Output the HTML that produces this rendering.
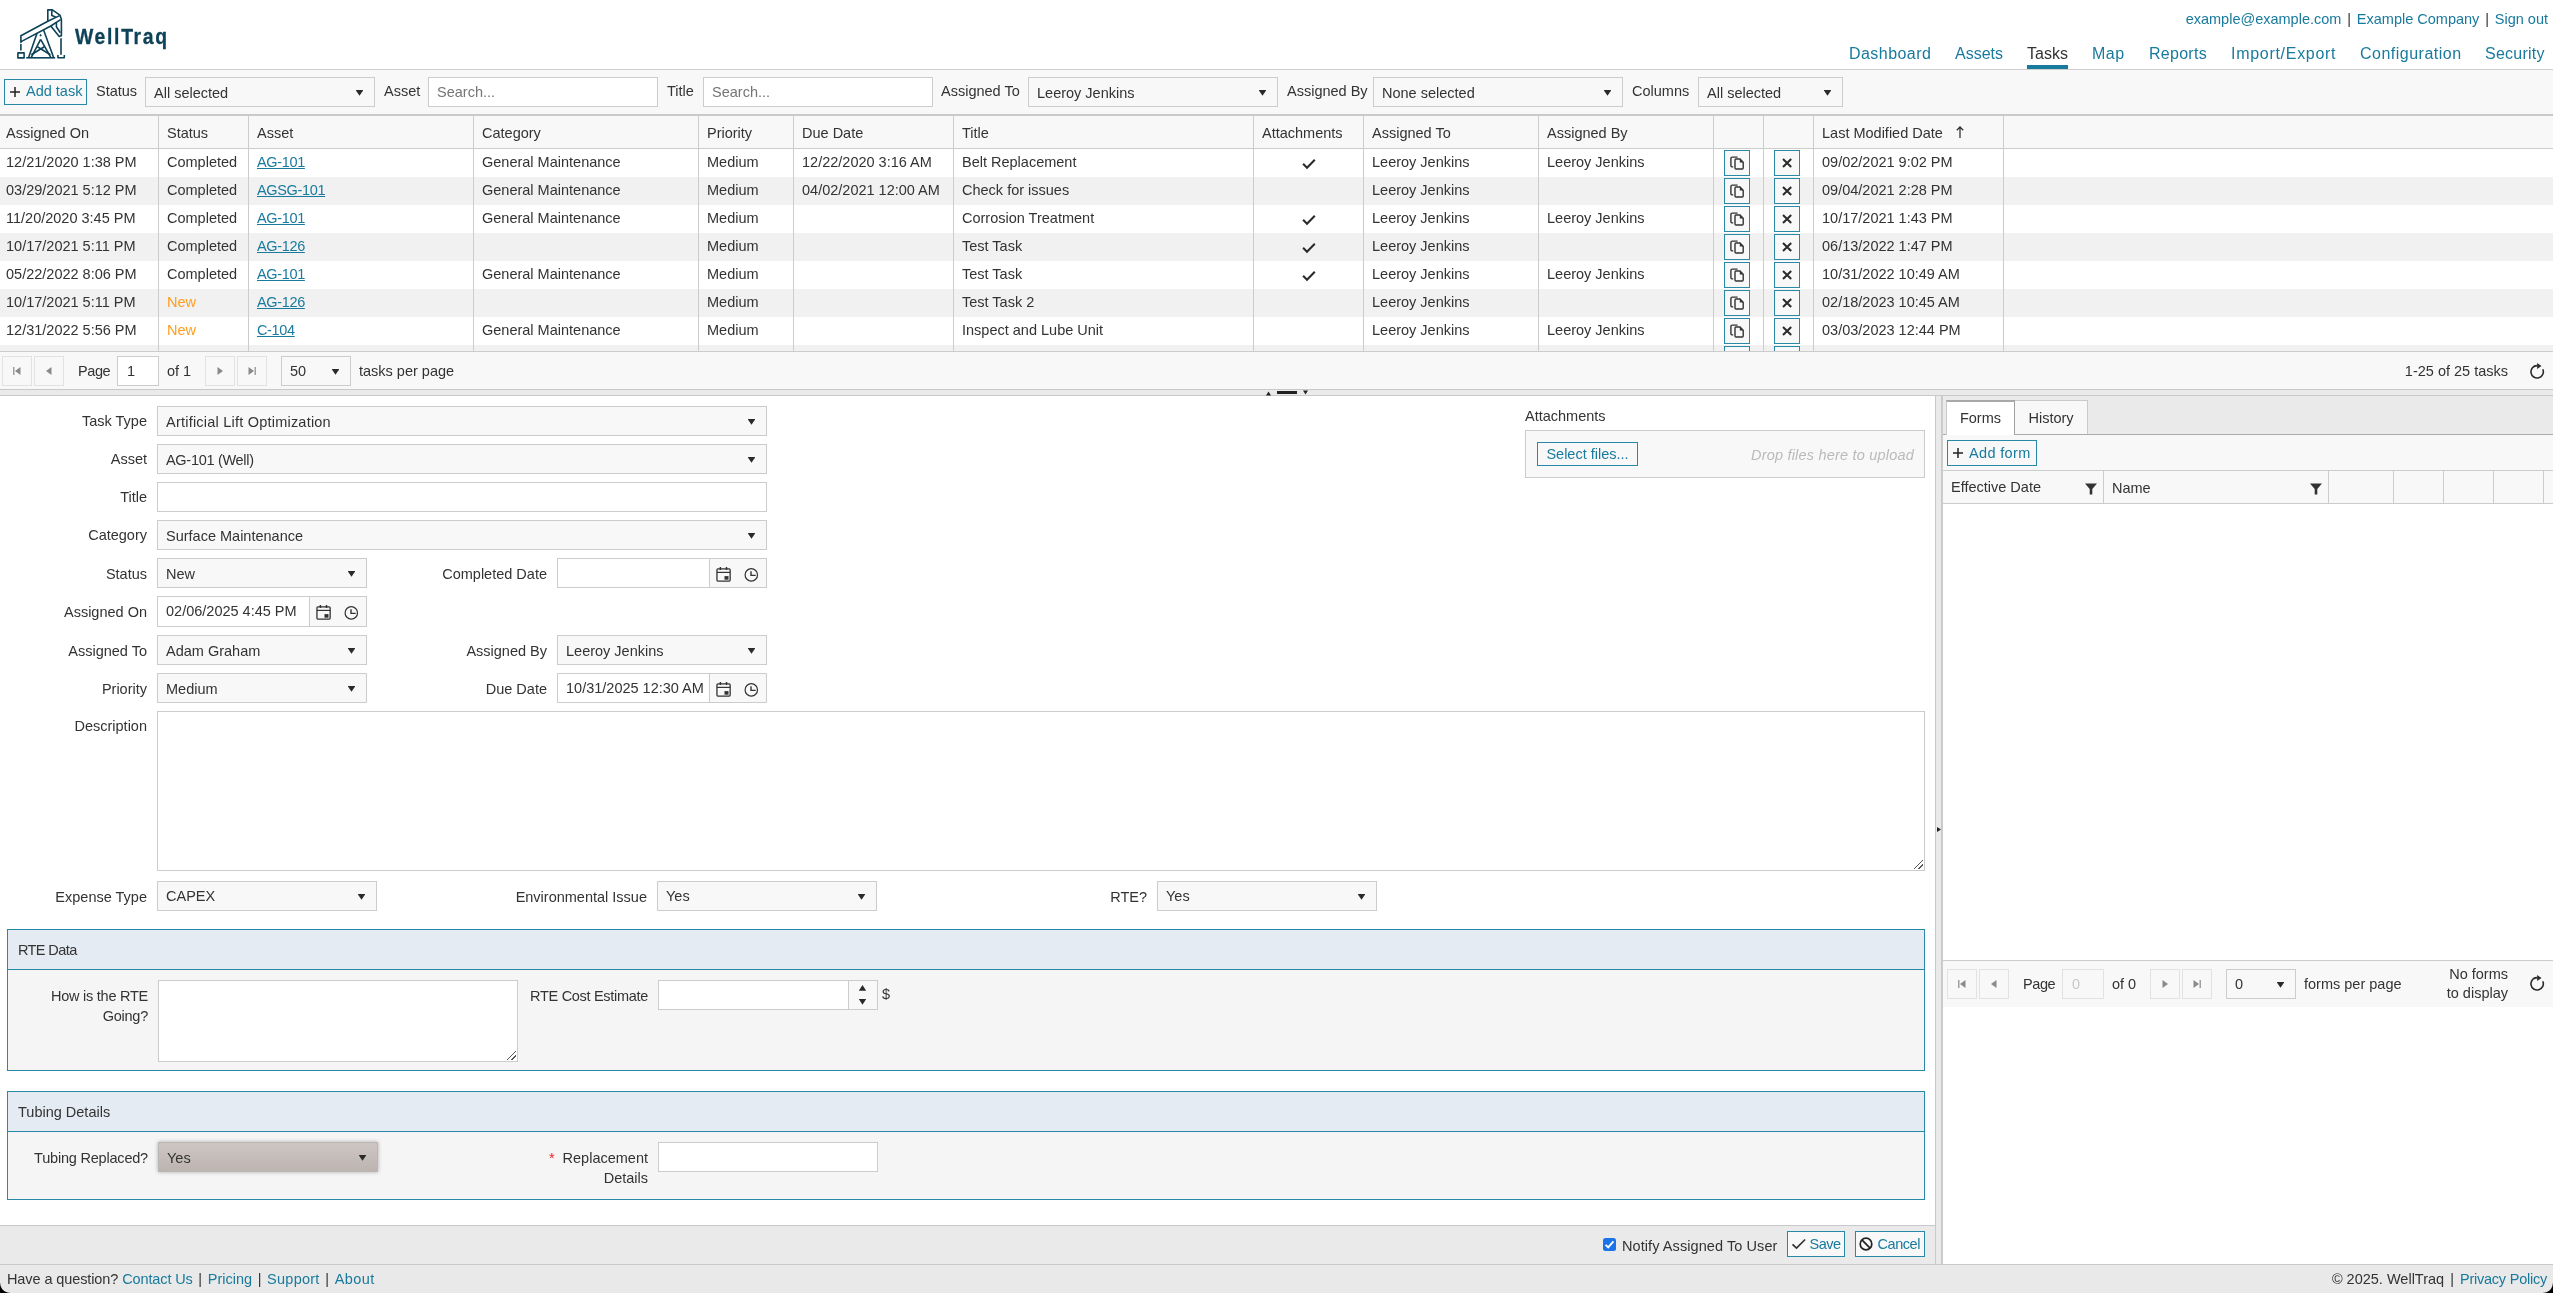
<!DOCTYPE html>
<html lang="en">
<head>
<meta charset="utf-8">
<title>WellTraq - Tasks</title>
<style>
*{box-sizing:border-box;margin:0;padding:0}
html,body{width:2553px;height:1293px;overflow:hidden;background:#fff}
body{font-family:"Liberation Sans",sans-serif;font-size:14.5px;color:#333;position:relative;line-height:20px}
a{color:#187a9d;text-decoration:none}
#wrap{position:absolute;left:0;top:0;width:2553px;height:1293px;overflow:hidden;will-change:transform}
.abs{position:absolute}
.t{position:absolute;white-space:nowrap;line-height:20px}
.r{text-align:right}
/* header */
#hdr{position:absolute;left:0;top:0;width:2553px;height:70px;border-bottom:1px solid #cfcfcf;background:#fff}
#brand{position:absolute;left:75px;top:20px;font-size:22.5px;font-weight:bold;color:#0e4258;letter-spacing:1.95px;line-height:34px;transform:scaleX(.86);transform-origin:0 0;white-space:nowrap;-webkit-text-stroke:.3px #0e4258}
.nav{position:absolute;top:43px;font-size:16px;line-height:22px;white-space:nowrap}
.nav.cur{color:#333}
.nav.cur:after{content:"";position:absolute;left:0;right:0;top:22px;height:4px;background:#187a9d}
/* toolbar */
#tb{position:absolute;left:0;top:70px;width:2553px;height:46px;background:#f8f8f8;border-bottom:2px solid #c9c9c9}
.btn{position:absolute;border:1px solid #2788a8;background:#f8f8f8;color:#187a9d;white-space:nowrap;line-height:22px;height:26px}
.sel{position:absolute;border:1px solid #ccc;background:#f8f8f8;height:30px;line-height:30px;padding-left:8px;white-space:nowrap;color:#333}
.sel:after{content:"";position:absolute;right:10.6px;top:12px;width:7.8px;height:5.8px;background:#2a2a2a;clip-path:polygon(0 0,100% 0,50% 100%)}
.inp{position:absolute;border:1px solid #ccc;background:#fff;height:30px;line-height:28px;padding-left:8px;white-space:nowrap;color:#333}
.ph{color:#757575}
/* grid */
#grid{position:absolute;left:0;top:116px;width:2553px;height:235px;overflow:hidden;background:#fff}
#grid table{border-collapse:separate;border-spacing:0;table-layout:fixed;width:2553px}
#grid th{height:33px;background:#f8f8f8;border-bottom:1px solid #ccc;font-weight:normal;text-align:left;padding:2px 0 0 8px;border-left:1px solid #ccc;white-space:nowrap;overflow:hidden}
#grid td{height:28px;padding:0 0 0 8px;border-left:1px solid #ccc;white-space:nowrap;overflow:hidden;line-height:20px;vertical-align:top;padding-top:3px}
#grid th:first-child,#grid td:first-child{border-left:0;padding-left:6px}
#grid tr.alt td{background:#f1f1f1}
#grid td a{text-decoration:underline;letter-spacing:-.35px}
.new{color:#ff9d1e}
.gb{display:block;width:26px;height:26px;border:1px solid #2b89a8;background:#f8f8f8;position:relative}
.gb svg{position:absolute;left:-1px;top:-1px}
tr.alt .gb{display:block;width:26px;height:26px;border:1px solid #2b89a8;background:#f8f8f8;position:relative}
.gb svg{position:absolute;left:-1px;top:-1px}
#grid td.c{text-align:center;padding:0;line-height:0}
#grid td.c svg{display:block;margin:0 auto}
#grid td.b{padding:1px 0 0 10px}

/* pager */
.pg{position:absolute;background:#f8f8f8}
.pb{position:absolute;width:30px;height:30px;border:1px solid #e2e2e2;background:#f8f8f8}
.pb svg{position:absolute;left:6px;top:6px}
/* splitters */
#hs{position:absolute;left:0;top:389px;width:2553px;height:7px;background:#eaeaea;border-top:1px solid #c9c9c9;border-bottom:1px solid #c9c9c9}
#vs{position:absolute;left:1935px;top:396px;width:7px;height:868px;background:#eaeaea;border-left:1px solid #c9c9c9;border-right:1px solid #c9c9c9}
/* form */
.lb{position:absolute;white-space:nowrap;text-align:right;line-height:20px}
.fs{position:absolute;border:1px solid #2788a8;background:#f5f5f5}
.fs .h{position:absolute;left:0;top:0;right:0;height:40px;background:#e4ebf3;border-bottom:1px solid #2788a8;padding:10px 0 0 10px;line-height:20px}
.dt{position:absolute;border:1px solid #ccc;background:#fff;height:30px;line-height:28px;padding-left:8px;white-space:nowrap;width:210px}
.dt .ic{position:absolute;right:0;top:0;width:57px;height:100%;background:#f8f8f8;border-left:1px solid #ccc}
.dt .ic svg{position:absolute;left:0;top:0}

.ta:after{content:"";position:absolute;right:1px;bottom:1px;width:9px;height:9px;background:linear-gradient(135deg,transparent 0,transparent 46%,#555 46%,#555 54%,transparent 54%,transparent 71%,#555 71%,#555 79%,transparent 79%)}
.sel.hov{background:linear-gradient(#cec6c3,#bdb4b0);border-color:#b9b6b4;box-shadow:0 0 4px rgba(0,0,0,.3)}
</style>
</head>
<body>
<div id="wrap">
<div id="hdr">
  <svg class="abs" style="left:10px;top:4px" width="64" height="60" viewBox="0 0 64 60" fill="none" stroke="#0e4258" stroke-width="1.6" stroke-linejoin="round" stroke-linecap="butt">
    <path d="M7.9 48.9h6.2v5H7.9z"/>
    <path d="M16.2 53.8h29"/>
    <path d="M47.9 51v2.7h6.4V51"/>
    <path d="M51 34.3v16.5M10.9 39.9v6.7"/>
    <path d="M10.9 38.4V31.8L37.8 17.2V5.9h4.6l7.5 5.2 1.5 4.4v16.2l-2.2 .8L40.8 22 11.6 37.4z"/>
    <path d="M37.8 17.2L49.6 11.6M50.6 15.6L40.8 22"/>
    <path d="M41.8 6.2v5.4l3.9 1.3M46.4 18.6v4.1l3.9 6.1"/>
    <path d="M27.1 28.9L18.6 53.4M33.6 26L43.6 53.4M30.6 35.3L21.3 53.4M30.6 35.3L40.8 53.4"/>
    <path d="M27.4 42.7L40.4 50.8M34.3 42.7L21.3 50.8"/>
    <circle cx="30.6" cy="31.3" r="0.7" fill="#0e4258" stroke-width="0.8"/>
  </svg>
  <div id="brand">WellTraq</div>
  <div class="t" style="right:5px;top:9px"><a>example@example.com</a> <span style="margin:0 1.8px">|</span> <a>Example Company</a> <span style="margin:0 1.8px">|</span> <a>Sign out</a></div>
  <a class="nav" style="left:1849px;letter-spacing:0.45px">Dashboard</a>
  <a class="nav" style="left:1955px">Assets</a>
  <a class="nav cur" style="left:2027px">Tasks</a>
  <a class="nav" style="left:2092px;letter-spacing:0.46px">Map</a>
  <a class="nav" style="left:2149px;letter-spacing:0.27px">Reports</a>
  <a class="nav" style="left:2231px;letter-spacing:0.71px">Import/Export</a>
  <a class="nav" style="left:2360px;letter-spacing:0.49px">Configuration</a>
  <a class="nav" style="left:2485px;letter-spacing:0.24px">Security</a>
</div>
<div id="tb">
  <div class="btn" style="left:4px;top:9px;width:83px;padding-left:21px">Add task<svg class="abs" style="left:4px;top:6px" width="12" height="12" viewBox="0 0 12 12"><path d="M6 1v10M1 6h10" stroke="#222" stroke-width="1.5"/></svg></div>
  <div class="t" style="left:96px;top:11px">Status</div>
  <div class="sel" style="left:145px;top:7px;width:230px">All selected</div>
  <div class="t" style="left:384px;top:11px">Asset</div>
  <div class="inp ph" style="left:428px;top:7px;width:230px">Search...</div>
  <div class="t" style="left:667px;top:11px">Title</div>
  <div class="inp ph" style="left:703px;top:7px;width:230px">Search...</div>
  <div class="t" style="left:941px;top:11px">Assigned To</div>
  <div class="sel" style="left:1028px;top:7px;width:250px">Leeroy Jenkins</div>
  <div class="t" style="left:1287px;top:11px">Assigned By</div>
  <div class="sel" style="left:1373px;top:7px;width:250px">None selected</div>
  <div class="t" style="left:1632px;top:11px">Columns</div>
  <div class="sel" style="left:1698px;top:7px;width:145px">All selected</div>
</div>
<div id="grid">
<table>
<colgroup><col style="width:158px"><col style="width:90px"><col style="width:225px"><col style="width:225px"><col style="width:95px"><col style="width:160px"><col style="width:300px"><col style="width:110px"><col style="width:175px"><col style="width:175px"><col style="width:50px"><col style="width:50px"><col style="width:190px"><col></colgroup>
<thead><tr><th>Assigned On</th><th>Status</th><th>Asset</th><th>Category</th><th>Priority</th><th>Due Date</th><th>Title</th><th>Attachments</th><th>Assigned To</th><th>Assigned By</th><th></th><th></th><th>Last Modified Date<svg style="margin-left:12px;vertical-align:-1px" width="10" height="14" viewBox="0 0 10 14"><path d="M5 2v11M1.8 5.2L5 2l3.2 3.2" fill="none" stroke="#333" stroke-width="1.3"/></svg></th><th></th></tr></thead>
<tbody id="gbody">
<tr><td>12/21/2020 1:38 PM</td><td>Completed</td><td><a>AG-101</a></td><td>General Maintenance</td><td>Medium</td><td>12/22/2020 3:16 AM</td><td>Belt Replacement</td><td class="c"><svg width="16" height="28" viewBox="0 0 16 28"><path d="M2.1 14.7L6 18.7l7.8-8" fill="none" stroke="#2a2a2a" stroke-width="2"/></svg></td><td>Leeroy Jenkins</td><td>Leeroy Jenkins</td><td class="b"><span class="gb"><svg width="26" height="26" viewBox="0 0 26 26"><path d="M13.6 7.1H8.4Q6.9 7.1 6.9 8.6v6.8q0 1.5 1.5 1.5h.8" fill="none" stroke="#333" stroke-width="1.4"/><path d="M12 9h4l3.2 3.2V18q0 1-1 1H12q-1 0-1-1v-8q0-1 1-1z" fill="none" stroke="#333" stroke-width="1.4"/><path d="M15.8 8.8l3.6 3.6h-3.6z" fill="#333"/></svg></span></td><td class="b"><span class="gb"><svg width="26" height="26" viewBox="0 0 26 26"><path d="M9 9l8.2 8M17.2 9L9 17" fill="none" stroke="#2a2a2a" stroke-width="2"/></svg></span></td><td>09/02/2021 9:02 PM</td><td></td></tr>
<tr class="alt"><td>03/29/2021 5:12 PM</td><td>Completed</td><td><a>AGSG-101</a></td><td>General Maintenance</td><td>Medium</td><td>04/02/2021 12:00 AM</td><td>Check for issues</td><td class="c"></td><td>Leeroy Jenkins</td><td></td><td class="b"><span class="gb"><svg width="26" height="26" viewBox="0 0 26 26"><path d="M13.6 7.1H8.4Q6.9 7.1 6.9 8.6v6.8q0 1.5 1.5 1.5h.8" fill="none" stroke="#333" stroke-width="1.4"/><path d="M12 9h4l3.2 3.2V18q0 1-1 1H12q-1 0-1-1v-8q0-1 1-1z" fill="none" stroke="#333" stroke-width="1.4"/><path d="M15.8 8.8l3.6 3.6h-3.6z" fill="#333"/></svg></span></td><td class="b"><span class="gb"><svg width="26" height="26" viewBox="0 0 26 26"><path d="M9 9l8.2 8M17.2 9L9 17" fill="none" stroke="#2a2a2a" stroke-width="2"/></svg></span></td><td>09/04/2021 2:28 PM</td><td></td></tr>
<tr><td>11/20/2020 3:45 PM</td><td>Completed</td><td><a>AG-101</a></td><td>General Maintenance</td><td>Medium</td><td></td><td>Corrosion Treatment</td><td class="c"><svg width="16" height="28" viewBox="0 0 16 28"><path d="M2.1 14.7L6 18.7l7.8-8" fill="none" stroke="#2a2a2a" stroke-width="2"/></svg></td><td>Leeroy Jenkins</td><td>Leeroy Jenkins</td><td class="b"><span class="gb"><svg width="26" height="26" viewBox="0 0 26 26"><path d="M13.6 7.1H8.4Q6.9 7.1 6.9 8.6v6.8q0 1.5 1.5 1.5h.8" fill="none" stroke="#333" stroke-width="1.4"/><path d="M12 9h4l3.2 3.2V18q0 1-1 1H12q-1 0-1-1v-8q0-1 1-1z" fill="none" stroke="#333" stroke-width="1.4"/><path d="M15.8 8.8l3.6 3.6h-3.6z" fill="#333"/></svg></span></td><td class="b"><span class="gb"><svg width="26" height="26" viewBox="0 0 26 26"><path d="M9 9l8.2 8M17.2 9L9 17" fill="none" stroke="#2a2a2a" stroke-width="2"/></svg></span></td><td>10/17/2021 1:43 PM</td><td></td></tr>
<tr class="alt"><td>10/17/2021 5:11 PM</td><td>Completed</td><td><a>AG-126</a></td><td></td><td>Medium</td><td></td><td>Test Task</td><td class="c"><svg width="16" height="28" viewBox="0 0 16 28"><path d="M2.1 14.7L6 18.7l7.8-8" fill="none" stroke="#2a2a2a" stroke-width="2"/></svg></td><td>Leeroy Jenkins</td><td></td><td class="b"><span class="gb"><svg width="26" height="26" viewBox="0 0 26 26"><path d="M13.6 7.1H8.4Q6.9 7.1 6.9 8.6v6.8q0 1.5 1.5 1.5h.8" fill="none" stroke="#333" stroke-width="1.4"/><path d="M12 9h4l3.2 3.2V18q0 1-1 1H12q-1 0-1-1v-8q0-1 1-1z" fill="none" stroke="#333" stroke-width="1.4"/><path d="M15.8 8.8l3.6 3.6h-3.6z" fill="#333"/></svg></span></td><td class="b"><span class="gb"><svg width="26" height="26" viewBox="0 0 26 26"><path d="M9 9l8.2 8M17.2 9L9 17" fill="none" stroke="#2a2a2a" stroke-width="2"/></svg></span></td><td>06/13/2022 1:47 PM</td><td></td></tr>
<tr><td>05/22/2022 8:06 PM</td><td>Completed</td><td><a>AG-101</a></td><td>General Maintenance</td><td>Medium</td><td></td><td>Test Task</td><td class="c"><svg width="16" height="28" viewBox="0 0 16 28"><path d="M2.1 14.7L6 18.7l7.8-8" fill="none" stroke="#2a2a2a" stroke-width="2"/></svg></td><td>Leeroy Jenkins</td><td>Leeroy Jenkins</td><td class="b"><span class="gb"><svg width="26" height="26" viewBox="0 0 26 26"><path d="M13.6 7.1H8.4Q6.9 7.1 6.9 8.6v6.8q0 1.5 1.5 1.5h.8" fill="none" stroke="#333" stroke-width="1.4"/><path d="M12 9h4l3.2 3.2V18q0 1-1 1H12q-1 0-1-1v-8q0-1 1-1z" fill="none" stroke="#333" stroke-width="1.4"/><path d="M15.8 8.8l3.6 3.6h-3.6z" fill="#333"/></svg></span></td><td class="b"><span class="gb"><svg width="26" height="26" viewBox="0 0 26 26"><path d="M9 9l8.2 8M17.2 9L9 17" fill="none" stroke="#2a2a2a" stroke-width="2"/></svg></span></td><td>10/31/2022 10:49 AM</td><td></td></tr>
<tr class="alt"><td>10/17/2021 5:11 PM</td><td class="new">New</td><td><a>AG-126</a></td><td></td><td>Medium</td><td></td><td>Test Task 2</td><td class="c"></td><td>Leeroy Jenkins</td><td></td><td class="b"><span class="gb"><svg width="26" height="26" viewBox="0 0 26 26"><path d="M13.6 7.1H8.4Q6.9 7.1 6.9 8.6v6.8q0 1.5 1.5 1.5h.8" fill="none" stroke="#333" stroke-width="1.4"/><path d="M12 9h4l3.2 3.2V18q0 1-1 1H12q-1 0-1-1v-8q0-1 1-1z" fill="none" stroke="#333" stroke-width="1.4"/><path d="M15.8 8.8l3.6 3.6h-3.6z" fill="#333"/></svg></span></td><td class="b"><span class="gb"><svg width="26" height="26" viewBox="0 0 26 26"><path d="M9 9l8.2 8M17.2 9L9 17" fill="none" stroke="#2a2a2a" stroke-width="2"/></svg></span></td><td>02/18/2023 10:45 AM</td><td></td></tr>
<tr><td>12/31/2022 5:56 PM</td><td class="new">New</td><td><a>C-104</a></td><td>General Maintenance</td><td>Medium</td><td></td><td>Inspect and Lube Unit</td><td class="c"></td><td>Leeroy Jenkins</td><td>Leeroy Jenkins</td><td class="b"><span class="gb"><svg width="26" height="26" viewBox="0 0 26 26"><path d="M13.6 7.1H8.4Q6.9 7.1 6.9 8.6v6.8q0 1.5 1.5 1.5h.8" fill="none" stroke="#333" stroke-width="1.4"/><path d="M12 9h4l3.2 3.2V18q0 1-1 1H12q-1 0-1-1v-8q0-1 1-1z" fill="none" stroke="#333" stroke-width="1.4"/><path d="M15.8 8.8l3.6 3.6h-3.6z" fill="#333"/></svg></span></td><td class="b"><span class="gb"><svg width="26" height="26" viewBox="0 0 26 26"><path d="M9 9l8.2 8M17.2 9L9 17" fill="none" stroke="#2a2a2a" stroke-width="2"/></svg></span></td><td>03/03/2023 12:44 PM</td><td></td></tr>
<tr class="alt"><td></td><td></td><td></td><td></td><td></td><td></td><td></td><td class="c"></td><td></td><td></td><td class="b"><span class="gb"><svg width="26" height="26" viewBox="0 0 26 26"><path d="M13.6 7.1H8.4Q6.9 7.1 6.9 8.6v6.8q0 1.5 1.5 1.5h.8" fill="none" stroke="#333" stroke-width="1.4"/><path d="M12 9h4l3.2 3.2V18q0 1-1 1H12q-1 0-1-1v-8q0-1 1-1z" fill="none" stroke="#333" stroke-width="1.4"/><path d="M15.8 8.8l3.6 3.6h-3.6z" fill="#333"/></svg></span></td><td class="b"><span class="gb"><svg width="26" height="26" viewBox="0 0 26 26"><path d="M9 9l8.2 8M17.2 9L9 17" fill="none" stroke="#2a2a2a" stroke-width="2"/></svg></span></td><td></td><td></td></tr>
</tbody>
</table>
</div>
<div class="pg" style="left:0;top:351px;width:2553px;height:38px;border-top:1px solid #ccc">
  <div class="pb" style="left:2px;top:4px"><svg width="16" height="16" viewBox="0 0 16 16"><path d="M4.2 4h1.2v8H4.2zM11.5 4v8L6 8z" fill="#8a8a8a"/></svg></div>
  <div class="pb" style="left:34px;top:4px"><svg width="16" height="16" viewBox="0 0 16 16"><path d="M10.5 4v8L5 8z" fill="#8a8a8a"/></svg></div>
  <div class="t" style="left:78px;top:9px;letter-spacing:-.4px">Page</div>
  <div class="inp" style="left:117px;top:4px;width:42px;padding-left:9px">1</div>
  <div class="t" style="left:167px;top:9px">of 1</div>
  <div class="pb" style="left:205px;top:4px"><svg width="16" height="16" viewBox="0 0 16 16"><path d="M5.5 4v8L11 8z" fill="#8a8a8a"/></svg></div>
  <div class="pb" style="left:237px;top:4px"><svg width="16" height="16" viewBox="0 0 16 16"><path d="M10.6 4h1.2v8h-1.2zM4.5 4v8L10 8z" fill="#8a8a8a"/></svg></div>
  <div class="sel" style="left:281px;top:4px;width:70px;line-height:28px">50</div>
  <div class="t" style="left:359px;top:9px">tasks per page</div>
  <div class="t" style="right:45px;top:9px">1-25 of 25 tasks</div>
  <div class="abs" style="left:2528px;top:10px"><svg width="18" height="18" viewBox="0 0 18 18"><path d="M9.1 3.6A6.2 6.2 0 1 0 14.8 7.3" fill="none" stroke="#2a2a2a" stroke-width="1.6"/><path d="M9.1 .9l4.4 3.1-4.4 2.9z" fill="#2a2a2a"/></svg></div>
</div>
<div id="hs"><svg class="abs" style="left:1264px;top:0" width="50" height="6" viewBox="0 0 50 6"><path d="M2 5.5l2.5-4 2.5 4zM13 1h20v3H13zM39 0.5l2.5 4 2.5-4z" fill="#222"/></svg></div>
<div id="vs"><svg class="abs" style="left:0;top:429px" width="6" height="10" viewBox="0 0 6 10"><path d="M1 2l4 2.5L1 7z" fill="#222"/></svg></div>

<div id="form">
<div class="lb" style="left:0;width:147px;top:411px">Task Type</div><div class="sel" style="left:157px;top:406px;width:610px;letter-spacing:.22px">Artificial Lift Optimization</div>
<div class="lb" style="left:0;width:147px;top:449px">Asset</div><div class="sel" style="left:157px;top:444px;width:610px;letter-spacing:-.3px">AG-101 (Well)</div>
<div class="lb" style="left:0;width:147px;top:487px">Title</div><div class="inp" style="left:157px;top:482px;width:610px"></div>
<div class="lb" style="left:0;width:147px;top:525px">Category</div><div class="sel" style="left:157px;top:520px;width:610px">Surface Maintenance</div>
<div class="lb" style="left:0;width:147px;top:564px">Status</div><div class="sel" style="left:157px;top:558px;width:210px">New</div>
<div class="lb" style="left:0;width:547px;top:564px">Completed Date</div><div class="dt" style="left:557px;top:558px"><span class="ic"><svg width="56" height="28" viewBox="0 0 56 28" fill="none" stroke="#333"><rect x="6.95" y="9.95" width="13.2" height="12.1" rx="1" stroke-width="1.3"/><path d="M6.95 13.4h13.2" stroke-width="1.2"/><path d="M10.4 8.1v2.8M16.5 8.1v2.8" stroke-width="1.5"/><path d="M14.5 17.1h4v3.6h-4z" fill="#333" stroke="none"/><circle cx="41.3" cy="15.9" r="6.2" stroke-width="1.2"/><path d="M41 12.2v4.2h4.7" stroke-width="1.4"/></svg></span></div>
<div class="lb" style="left:0;width:147px;top:602px">Assigned On</div><div class="dt" style="left:157px;top:596px;height:31px">02/06/2025 4:45 PM<span class="ic"><svg width="56" height="28" viewBox="0 0 56 28" fill="none" stroke="#333"><rect x="6.95" y="9.95" width="13.2" height="12.1" rx="1" stroke-width="1.3"/><path d="M6.95 13.4h13.2" stroke-width="1.2"/><path d="M10.4 8.1v2.8M16.5 8.1v2.8" stroke-width="1.5"/><path d="M14.5 17.1h4v3.6h-4z" fill="#333" stroke="none"/><circle cx="41.3" cy="15.9" r="6.2" stroke-width="1.2"/><path d="M41 12.2v4.2h4.7" stroke-width="1.4"/></svg></span></div>
<div class="lb" style="left:0;width:147px;top:641px">Assigned To</div><div class="sel" style="left:157px;top:635px;width:210px">Adam Graham</div>
<div class="lb" style="left:0;width:547px;top:641px">Assigned By</div><div class="sel" style="left:557px;top:635px;width:210px">Leeroy Jenkins</div>
<div class="lb" style="left:0;width:147px;top:679px">Priority</div><div class="sel" style="left:157px;top:673px;width:210px">Medium</div>
<div class="lb" style="left:0;width:547px;top:679px">Due Date</div><div class="dt" style="left:557px;top:673px">10/31/2025 12:30 AM<span class="ic"><svg width="56" height="28" viewBox="0 0 56 28" fill="none" stroke="#333"><rect x="6.95" y="9.95" width="13.2" height="12.1" rx="1" stroke-width="1.3"/><path d="M6.95 13.4h13.2" stroke-width="1.2"/><path d="M10.4 8.1v2.8M16.5 8.1v2.8" stroke-width="1.5"/><path d="M14.5 17.1h4v3.6h-4z" fill="#333" stroke="none"/><circle cx="41.3" cy="15.9" r="6.2" stroke-width="1.2"/><path d="M41 12.2v4.2h4.7" stroke-width="1.4"/></svg></span></div>
<div class="lb" style="left:0;width:147px;top:716px">Description</div><div class="inp ta" style="left:157px;top:711px;width:1768px;height:160px"></div>
<div class="lb" style="left:0;width:147px;top:887px">Expense Type</div><div class="sel" style="left:157px;top:881px;width:220px;line-height:28px">CAPEX</div>
<div class="lb" style="left:0;width:647px;top:887px">Environmental Issue</div><div class="sel" style="left:657px;top:881px;width:220px;line-height:28px">Yes</div>
<div class="lb" style="left:0;width:1147px;top:887px">RTE?</div><div class="sel" style="left:1157px;top:881px;width:220px;line-height:28px">Yes</div>
<div class="t" style="left:1525px;top:406px">Attachments</div>
<div class="abs" style="left:1525px;top:430px;width:400px;height:48px;border:1px solid #ccc;background:#f8f8f8">
  <div class="btn" style="left:11px;top:11px;width:101px;height:24px;line-height:22px;text-align:center">Select files...</div>
  <div class="t" style="right:10px;top:14px;color:#bababa;font-style:italic;letter-spacing:.2px">Drop files here to upload</div>
</div>
<div class="fs" style="left:7px;top:929px;width:1918px;height:142px">
  <div class="h" style="letter-spacing:-.6px">RTE Data</div>
  <div class="lb" style="left:0;width:140px;top:57px;white-space:normal;line-height:19.5px;letter-spacing:-.25px">How is the RTE Going?</div>
  <div class="inp ta" style="left:150px;top:50px;width:360px;height:82px"></div>
  <div class="lb" style="left:400px;width:240px;top:56px;letter-spacing:-.3px">RTE Cost Estimate</div>
  <div class="inp" style="left:650px;top:50px;width:220px"><span class="abs" style="right:0;top:0;width:29px;height:28px;background:#f8f8f8;border-left:1px solid #ccc"><svg class="abs" style="left:0;top:0" width="28" height="28" viewBox="0 0 28 28"><path d="M9.8 9.7l3.7-5.6 3.7 5.6zM9.8 18l3.7 5.8 3.7-5.8z" fill="#2a2a2a"/></svg></span></div>
  <div class="t" style="left:874px;top:54px">$</div>
</div>
<div class="fs" style="left:7px;top:1091px;width:1918px;height:109px">
  <div class="h">Tubing Details</div>
  <div class="lb" style="left:0;width:140px;top:56px;letter-spacing:-.2px">Tubing Replaced?</div>
  <div class="sel hov" style="left:150px;top:50px;width:220px">Yes</div>
  <div class="lb" style="left:400px;width:240px;top:57px;white-space:normal;line-height:19.5px"><span style="color:#e8202a;margin-right:4px">*</span> Replacement<br>Details</div>
  <div class="inp" style="left:650px;top:50px;width:220px"></div>
</div>
<div class="abs" style="left:0;top:1225px;width:1935px;height:39px;background:#eaeaea;border-top:1px solid #c9c9c9"></div>
<div class="abs" style="left:1603px;top:1238px;width:13px;height:13px;border-radius:2.5px;background:#1a73e8"><svg class="abs" style="left:0;top:0" width="13" height="13" viewBox="0 0 13 13"><path d="M2.6 6.8l2.6 2.6 5.2-6" fill="none" stroke="#fff" stroke-width="1.9"/></svg></div>
<div class="t" style="left:1622px;top:1236px;letter-spacing:.08px">Notify Assigned To User</div>
<div class="btn" style="left:1787px;top:1231px;width:58px;padding-left:21.5px;line-height:24px;letter-spacing:-.5px">Save<svg class="abs" style="left:3px;top:4px" width="16" height="16" viewBox="0 0 16 16"><path d="M1.5 8.3l4 3.8 8.6-8.6" fill="none" stroke="#333" stroke-width="1.7"/></svg></div>
<div class="btn" style="left:1855px;top:1231px;width:70px;padding-left:21.5px;line-height:24px;letter-spacing:-.45px">Cancel<svg class="abs" style="left:2px;top:4px" width="16" height="16" viewBox="0 0 16 16"><circle cx="8" cy="8" r="5.8" fill="none" stroke="#222" stroke-width="1.7"/><path d="M3.9 3.9l8.2 8.2" stroke="#222" stroke-width="1.7"/></svg></div>
</div>

<div id="right" class="abs" style="left:1942px;top:396px;width:611px;height:868px;background:#fff;border-left:1px solid #ccc">
  <div class="abs" style="left:0;top:0;width:610px;height:39px;background:#eaeaea;border-bottom:1px solid #ababab"></div>
  <div class="abs" style="left:3px;top:4px;width:69px;height:35px;background:#fff;border:1px solid #c9c9c9;border-top:2px solid #a8a8a8;border-right-color:#a0a0a0;border-bottom:0;text-align:center;line-height:33px">Forms</div>
  <div class="abs" style="left:72px;top:4px;width:73px;height:34px;background:#f8f8f8;border:1px solid #c9c9c9;border-left:0;border-bottom:0;text-align:center;line-height:34px">History</div>
  <div class="abs" style="left:0;top:39px;width:610px;height:36px;background:#f8f8f8"></div>
  <div class="btn" style="left:4px;top:44px;width:90px;padding-left:21px;line-height:24px;letter-spacing:.35px">Add form<svg class="abs" style="left:4px;top:6px" width="12" height="12" viewBox="0 0 12 12"><path d="M6 1v10M1 6h10" stroke="#222" stroke-width="1.5"/></svg></div>
  <div class="abs" style="left:0;top:74px;width:610px;height:34px;background:#f8f8f8;border-top:1px solid #ccc;border-bottom:1px solid #ccc">
    <div class="t" style="left:8px;top:6px">Effective Date</div>
    <div class="abs" style="left:141px;top:10px"><svg width="14" height="14" viewBox="0 0 14 14"><path d="M1 1.5h12L8.3 7v5.5H5.7V7z" fill="#333"/></svg></div>
    <div class="abs" style="left:160px;top:0;width:1px;height:32px;background:#ccc"></div>
    <div class="t" style="left:169px;top:7px">Name</div>
    <div class="abs" style="left:366px;top:10px"><svg width="14" height="14" viewBox="0 0 14 14"><path d="M1 1.5h12L8.3 7v5.5H5.7V7z" fill="#333"/></svg></div>
    <div class="abs" style="left:385px;top:0;width:1px;height:32px;background:#ccc"></div>
    <div class="abs" style="left:450px;top:0;width:1px;height:32px;background:#ccc"></div>
    <div class="abs" style="left:500px;top:0;width:1px;height:32px;background:#ccc"></div>
    <div class="abs" style="left:550px;top:0;width:1px;height:32px;background:#ccc"></div>
    <div class="abs" style="left:600px;top:0;width:1px;height:32px;background:#ccc"></div>
  </div>
  <div class="pg" style="left:0;top:564px;width:610px;height:47px;border-top:1px solid #ccc">
    <div class="pb" style="left:4px;top:8px"><svg width="16" height="16" viewBox="0 0 16 16"><path d="M4.2 4h1.2v8H4.2zM11.5 4v8L6 8z" fill="#8a8a8a"/></svg></div>
    <div class="pb" style="left:36px;top:8px"><svg width="16" height="16" viewBox="0 0 16 16"><path d="M10.5 4v8L5 8z" fill="#8a8a8a"/></svg></div>
    <div class="t" style="left:80px;top:13px;letter-spacing:-.4px">Page</div>
    <div class="inp" style="left:119px;top:8px;width:42px;padding-left:9px;color:#c8c8c8;border-color:#e2e2e2;background:#f8f8f8">0</div>
    <div class="t" style="left:169px;top:13px">of 0</div>
    <div class="pb" style="left:207px;top:8px"><svg width="16" height="16" viewBox="0 0 16 16"><path d="M5.5 4v8L11 8z" fill="#8a8a8a"/></svg></div>
    <div class="pb" style="left:239px;top:8px"><svg width="16" height="16" viewBox="0 0 16 16"><path d="M10.6 4h1.2v8h-1.2zM4.5 4v8L10 8z" fill="#8a8a8a"/></svg></div>
    <div class="sel" style="left:283px;top:8px;width:70px;line-height:28px">0</div>
    <div class="t" style="left:361px;top:13px">forms per page</div>
    <div class="t r" style="right:45px;top:4px;line-height:19px">No forms<br>to display</div>
    <div class="abs" style="left:585px;top:13px"><svg width="18" height="18" viewBox="0 0 18 18"><path d="M9.1 3.6A6.2 6.2 0 1 0 14.8 7.3" fill="none" stroke="#2a2a2a" stroke-width="1.6"/><path d="M9.1 .9l4.4 3.1-4.4 2.9z" fill="#2a2a2a"/></svg></div>
  </div>
</div>

<div id="ftr" class="abs" style="left:0;top:1264px;width:2553px;height:29px;background:#e9e9e9;border-top:1px solid #c9c9c9">
  <div class="t" style="left:7px;top:4px"><span style="letter-spacing:-.1px">Have a question? </span><a style="letter-spacing:-.12px">Contact Us</a> <span style="margin:0 1.6px">|</span> <a>Pricing</a> <span style="margin:0 1.6px">|</span> <a style="letter-spacing:.25px">Support</a> <span style="margin:0 1.6px">|</span> <a style="letter-spacing:.45px">About</a></div>
  <div class="t" style="right:6px;top:4px">© 2025. WellTraq <span style="margin:0 2px">|</span> <a style="letter-spacing:-.23px">Privacy Policy</a></div>
</div>

<div class="abs" style="left:0;bottom:0;width:10px;height:10px;background:radial-gradient(circle at 100% 0,transparent 9.3px,#000 10.3px)"></div>
<div class="abs" style="right:0;bottom:0;width:10px;height:10px;background:radial-gradient(circle at 0 0,transparent 9.3px,#000 10.3px)"></div>
</div>
</body>
</html>
